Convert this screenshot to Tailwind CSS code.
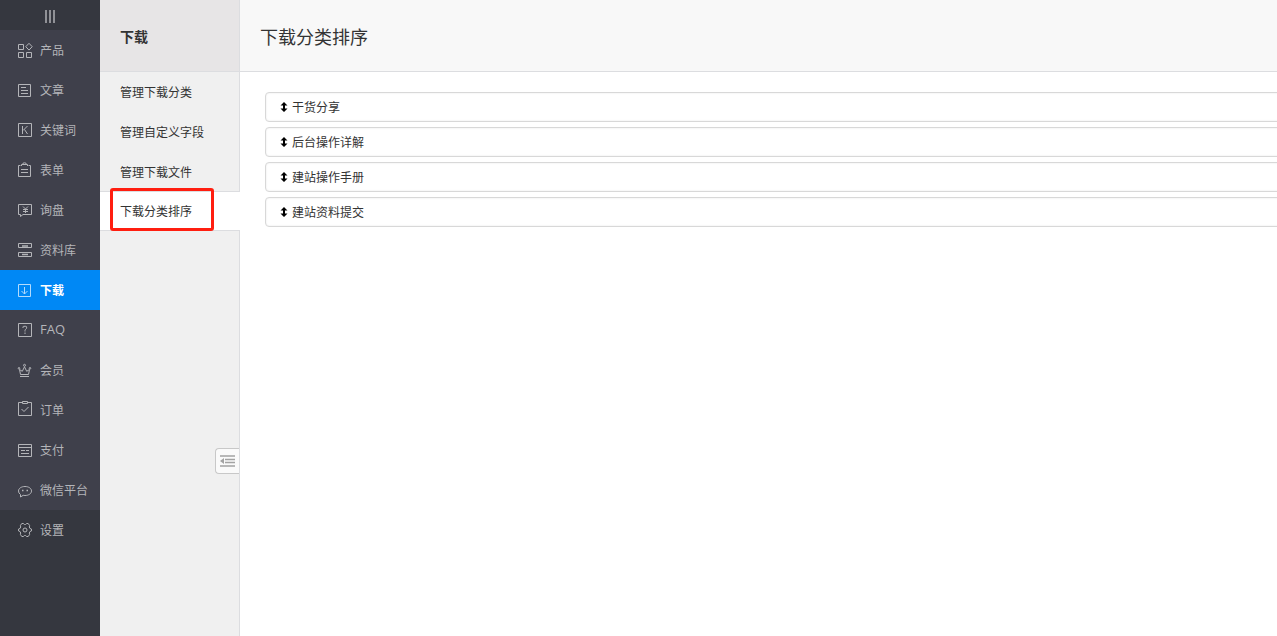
<!DOCTYPE html>
<html lang="zh-CN">
<head>
    <meta charset="UTF-8">
    <meta name="viewport" content="width=device-width, initial-scale=1.0">
    <title>下载分类排序</title>
    <script src="https://cdn.jsdelivr.net/npm/@tailwindcss/browser@4"></script>
</head>
<body class="flex min-h-screen overflow-x-hidden bg-white font-['Noto_Sans_CJK_SC',sans-serif] text-xs text-[#333333]">
    <!-- Main menu -->
    <aside class="w-[100px] shrink-0 bg-[#35373f] text-[#b4b5b9]">
        <button type="button" aria-label="收起菜单" class="flex h-[30px] w-full items-center justify-center">
            <svg class="mt-1 h-4 w-4" viewBox="0 0 16 16" fill="none" stroke="#909196" stroke-width="2"><path d="M4 1v13M8 1v13M12 1v13"/></svg>
        </button>
        <nav>
            <div class="bg-[#3f404b]">
                <a href="#" class="flex h-10 items-center gap-[7px] pl-[17px]">
                    <svg class="h-4 w-4 overflow-visible" viewBox="0 0 16 16" fill="none" stroke="currentColor"><path d="M1.5 2.5h5v5h-5zM1.5 10.5h5v5h-5zM9.5 10.5h5v5h-5zM12 1.300l3.200 3.400L12 8.100 8.800 4.700z"/></svg>
                    <span>产品</span>
                </a>
                <a href="#" class="flex h-10 items-center gap-[7px] pl-[17px]">
                    <svg class="h-4 w-4" viewBox="0 0 16 16" fill="none" stroke="currentColor"><path d="M1.5 2.5h12v12h-12zM4 5.5h5M4 8.5h7M4 11.5h7"/></svg>
                    <span>文章</span>
                </a>
                <a href="#" class="flex h-10 items-center gap-[7px] pl-[17px]">
                    <svg class="h-4 w-4" viewBox="0 0 16 16" fill="none" stroke="currentColor"><path d="M1.5 1.5h13v13h-13zM5.5 4v8M10.500 4L6 8.500M7.500 7.500l3 4.500"/></svg>
                    <span>关键词</span>
                </a>
                <a href="#" class="flex h-10 items-center gap-[7px] pl-[17px]">
                    <svg class="h-4 w-4" viewBox="0 0 16 16" fill="none" stroke="currentColor"><path d="M3.500 3.500h-2v11h12v-11h-2M4.500 4v-1.500h6V4M5.500 2.500q0-1.700 2-1.700t2 1.700M4 7.500h7M4 10.500h7"/></svg>
                    <span>表单</span>
                </a>
                <a href="#" class="flex h-10 items-center gap-[7px] pl-[17px]">
                    <svg class="h-4 w-4" viewBox="0 0 16 16" fill="none" stroke="currentColor"><path d="M1.500 2.500h13v10H6l-2.500 2v-2h-2zM6 4.500l2.500 2.500L11 4.500M6 7.500h5M6 9.500h5M8.500 7v4"/></svg>
                    <span>询盘</span>
                </a>
                <a href="#" class="flex h-10 items-center gap-[7px] pl-[17px]">
                    <svg class="h-4 w-4" viewBox="0 0 16 16" fill="none" stroke="currentColor"><path d="M1.500 1.500h13v4h-13zM1.500 10.500h13v4h-13z"/><path d="M5 4h6M5 12.500h6" stroke-width="1.500"/></svg>
                    <span>资料库</span>
                </a>
                <a href="#" aria-current="page" class="flex h-10 items-center gap-[7px] bg-[#0088f5] pl-[17px] font-bold text-white">
                    <svg class="h-4 w-4" viewBox="0 0 16 16" fill="none" stroke="#b3dbfc"><path d="M1.500 2.500h12v12h-12zM7.500 5v7M4.500 9l3 3 3-3"/></svg>
                    <span>下载</span>
                </a>
                <a href="#" class="flex h-10 items-center gap-[7px] pl-[17px]">
                    <svg class="h-4 w-4" viewBox="0 0 16 16" fill="none" stroke="currentColor"><path d="M1.500 1.500h13v13h-13zM6 6V5q0-.7.8-.7h2q.8 0 .8.800v.9q0 .6-.7 1.100Q8 7.600 8 8.500v1M8 10.500V12"/></svg>
                    <span class="font-['Open_Sans',sans-serif] text-[13px]">FAQ</span>
                </a>
                <a href="#" class="flex h-10 items-center gap-[7px] pl-[17px]">
                    <svg class="h-4 w-4" viewBox="0 0 16 16" fill="none" stroke="currentColor"><path d="M3 14.500h9M3.500 12.500l-1-5 2.800 1.800L7.500 4.800l2.200 4.500 2.800-1.800-1 5z"/><circle cx="7.500" cy="3.300" r="1"/><circle cx="2" cy="6.300" r=".8"/><circle cx="13" cy="6.300" r=".8"/></svg>
                    <span>会员</span>
                </a>
                <a href="#" class="flex h-10 items-center gap-[7px] pl-[17px]">
                    <svg class="h-4 w-4 overflow-visible" viewBox="0 0 16 16" fill="none" stroke="currentColor"><path d="M5 .5H1.500v13h13V.500H11M5.500-.5h5v2h-5zM4.500 7L7 9.500l4.500-4.500"/></svg>
                    <span>订单</span>
                </a>
                <a href="#" class="flex h-10 items-center gap-[7px] pl-[17px]">
                    <svg class="h-4 w-4" viewBox="0 0 16 16" fill="none" stroke="currentColor"><path d="M1.500 2.500h13v12h-13zM1.500 5.500h13M4 8.500h4M9 8.500h3M4 11.500h8"/></svg>
                    <span>支付</span>
                </a>
                <a href="#" class="flex h-10 items-center gap-[7px] pl-[17px]">
                    <svg class="h-4 w-4" viewBox="0 0 16 16" fill="none" stroke="currentColor"><path d="M3.500 15v-2.500Q1.500 11.200 1.500 9C1.500 6.400 4.300 4.500 8 4.500s6.500 1.900 6.500 4.500-2.800 4.500-6.500 4.500q-1 0-1.800-.2z"/><path d="M5 8.500h1.500M9.500 8.500H11" stroke-width="1.500"/></svg>
                    <span>微信平台</span>
                </a>
            </div>
            <a href="#" class="flex h-10 items-center gap-[7px] pl-[17px]">
                <svg class="h-4 w-4" viewBox="0 0 16 16" fill="none" stroke="currentColor" stroke-linejoin="round"><path d="M4.800 1.500h1.500l1.200 1h1l1.200-1h1.500l1.400 2-.3 1.500.7 1.500 1.500.6v1.800l-1.500.6-.7 1.500.3 1.500-1.400 2H9.700l-1.200-1h-1l-1.200 1H4.800l-1.400-2 .3-1.500L3 9.500l-1.500-.6V7.100L3 6.500l.7-1.500-.3-1.500z"/><circle cx="8" cy="8" r="2"/></svg>
                <span>设置</span>
            </a>
        </nav>
    </aside>

    <!-- Submenu -->
    <aside class="relative w-[140px] shrink-0 border-r border-[#dcdde0] bg-[#f0f0f0]">
        <h2 class="flex h-[71px] items-center bg-[#e7e5e6] pl-5 text-sm font-bold">下载</h2>
        <nav>
            <a href="#" class="flex h-10 items-center border-t border-[#dcdde0] pl-5">管理下载分类</a>
            <a href="#" class="flex h-10 items-center border-t border-transparent pl-5">管理自定义字段</a>
            <a href="#" class="flex h-10 items-center border-t border-transparent pl-5">管理下载文件</a>
            <a href="#" aria-current="page" class="relative -mr-px flex h-10 items-center border-y border-[#dcdde0] bg-white pl-5">
                下载分类排序
                <span class="absolute -top-1 left-[10px] h-[43px] w-[104px] rounded-[3px] border-3 border-[#ff1e10]"></span>
            </a>
        </nav>
        <button type="button" aria-label="收起子菜单" class="absolute top-[448px] right-0 flex h-[26px] w-6 items-center justify-center rounded-l border border-r-0 border-[#c8c8c8] bg-[#fafafa]">
            <svg class="h-3 w-4" viewBox="0 0 16 12" fill="none" stroke="#a3a3a3" stroke-width="2"><path d="M0 1h15M5 4.500h10M5 7.500h10M0 11h15" stroke-width="1.600"/><path d="M4 3v6L0 6z" fill="#a3a3a3" stroke="none"/></svg>
        </button>
    </aside>

    <main class="min-w-0 flex-1">
        <header class="flex h-[72px] items-center border-b border-[#dcdde0] bg-[#f8f8f8] pl-5">
            <h1 class="text-lg">下载分类排序</h1>
        </header>
        <ul class="-mr-2 flex flex-col gap-[5px] pt-5 pl-[25px]">
            <li class="flex h-[30px] cursor-move items-center gap-1 rounded border border-[#d8d8d8] pl-[14px] shadow-[inset_0_0_2px_#e5e5e5]">
                <svg class="h-[10px] w-2" viewBox="0 0 8 10"><path d="M4 0l3.500 3.500H5v3h2.500L4 10 .5 6.500H3v-3H.5z"/></svg>
                干货分享
            </li>
            <li class="flex h-[30px] cursor-move items-center gap-1 rounded border border-[#d8d8d8] pl-[14px] shadow-[inset_0_0_2px_#e5e5e5]">
                <svg class="h-[10px] w-2" viewBox="0 0 8 10"><path d="M4 0l3.500 3.500H5v3h2.500L4 10 .5 6.500H3v-3H.5z"/></svg>
                后台操作详解
            </li>
            <li class="flex h-[30px] cursor-move items-center gap-1 rounded border border-[#d8d8d8] pl-[14px] shadow-[inset_0_0_2px_#e5e5e5]">
                <svg class="h-[10px] w-2" viewBox="0 0 8 10"><path d="M4 0l3.500 3.500H5v3h2.500L4 10 .5 6.500H3v-3H.5z"/></svg>
                建站操作手册
            </li>
            <li class="flex h-[30px] cursor-move items-center gap-1 rounded border border-[#d8d8d8] pl-[14px] shadow-[inset_0_0_2px_#e5e5e5]">
                <svg class="h-[10px] w-2" viewBox="0 0 8 10"><path d="M4 0l3.500 3.500H5v3h2.500L4 10 .5 6.500H3v-3H.5z"/></svg>
                建站资料提交
            </li>
        </ul>
    </main>
</body>
</html>
